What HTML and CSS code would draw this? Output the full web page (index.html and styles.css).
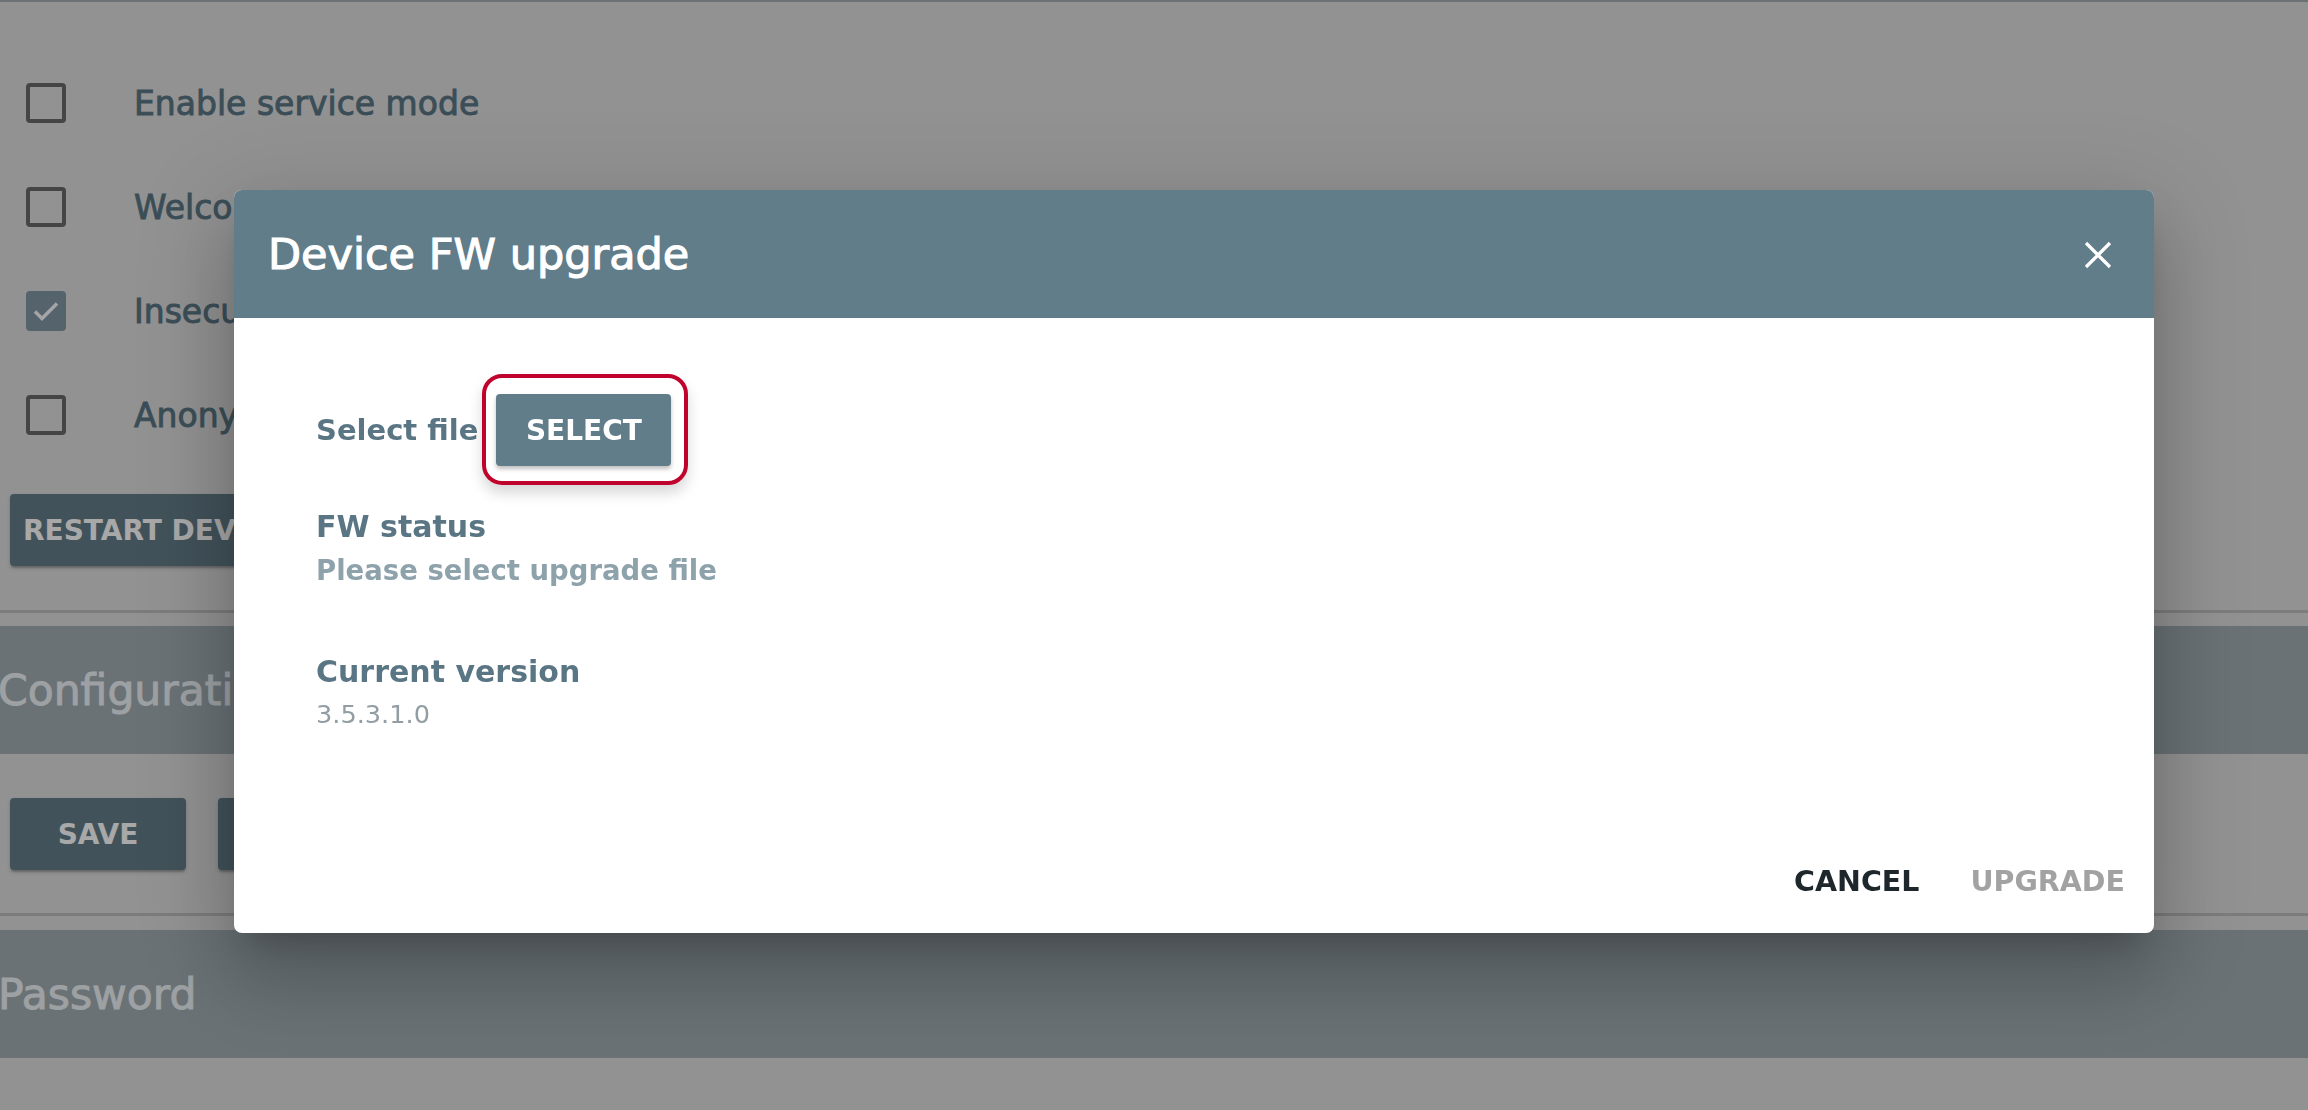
FILE: index.html
```html
<!DOCTYPE html>
<html lang="en">
<head>
<meta charset="utf-8">
<title>Device FW upgrade</title>
<link rel="stylesheet" href="styles.css">
</head>
<body>
<div class="page">
  <div class="top-strip"></div>
  <div class="options">
    <div class="option"><span class="box"></span><span class="opt-text">Enable service mode</span></div>
    <div class="option"><span class="box"></span><span class="opt-text">Welcome screen</span></div>
    <div class="option"><span class="box checked"><svg class="check" viewBox="0 0 40 40"><path d="M9 20.5 L16 27.5 L31 12.5" /></svg></span><span class="opt-text">Insecure</span></div>
    <div class="option"><span class="box"></span><span class="opt-text">Anonymous viewing</span></div>
  </div>
  <div class="actions actions-first"><button class="btn">RESTART DEVICE</button></div>
  <div class="divider"></div>
  <div class="band">Configuration</div>
  <div class="actions"><button class="btn">SAVE</button><button class="btn">RESTORE</button></div>
  <div class="divider divider-second"></div>
  <div class="band band-second">Password</div>
</div>

<div class="backdrop"></div>

<div class="dialog">
  <div class="dlg-head">
    <h2 class="dlg-title">Device FW upgrade</h2>
    <button class="close" aria-label="Close">
      <svg viewBox="0 0 28 28"><path d="M2 2 L26 26 M26 2 L2 26" /></svg>
    </button>
  </div>
  <div class="dlg-body">
    <div class="file-row">
      <span class="file-label">Select file</span>
      <span class="highlight"><button class="select-btn">SELECT</button></span>
    </div>
    <div class="field-label status-label">FW status</div>
    <div class="status-text">Please select upgrade file</div>
    <div class="field-label version-label">Current version</div>
    <div class="version-text">3.5.3.1.0</div>
  </div>
  <div class="dlg-foot">
    <button class="text-btn">CANCEL</button>
    <button class="text-btn disabled">UPGRADE</button>
  </div>
</div>
</body>
</html>
```

FILE: styles.css
```css
html, body {
  margin: 0;
  padding: 0;
}

body {
  width: 2308px;
  height: 1110px;
  overflow: hidden;
  background: #dedede;
  font-family: "DejaVu Sans", "Liberation Sans", sans-serif;
}

button {
  font-family: inherit;
  border: none;
  margin: 0;
  cursor: pointer;
}

.page {
  display: flex;
  flex-direction: column;
}

.top-strip {
  height: 2px;
  background: #a2adb3;
}

.options {
  display: flex;
  flex-direction: column;
  padding: 49px 0 0 26px;
}

.option {
  height: 104px;
  display: flex;
  align-items: center;
  gap: 68px;
}

.box {
  width: 40px;
  height: 40px;
  box-sizing: border-box;
  border: 4px solid #6a6a6a;
  border-radius: 4px;
  flex: none;
  display: flex;
  align-items: center;
  justify-content: center;
}

.box.checked {
  background: #8298a4;
  border-color: #8298a4;
}

.check {
  width: 40px;
  height: 40px;
  flex: none;
}

.check path {
  fill: none;
  stroke: #f7fbfd;
  stroke-width: 3.5;
}

.opt-text {
  font-size: 33px;
  color: #5a7785;
  -webkit-text-stroke: 0.9px #5a7785;
  white-space: nowrap;
}

.actions {
  display: flex;
  gap: 32px;
  padding-left: 10px;
  margin-top: 44px;
}

.actions-first {
  margin-top: 27px;
}

.btn {
  height: 72px;
  min-width: 176px;
  padding: 0 13px;
  background: #647d89;
  color: #ffffff;
  font-size: 28px;
  font-weight: bold;
  border-radius: 4px;
  box-shadow: 0 3px 2px -1px rgba(0,0,0,.2), 0 2px 4px rgba(0,0,0,.14);
}

.divider {
  height: 3px;
  background: #bcbcbc;
  margin-top: 44px;
}

.divider-second {
  margin-top: 43px;
}

.band {
  height: 128px;
  margin-top: 13px;
  background: #a2adb3;
  color: #f0f5f8;
  -webkit-text-stroke: 0.9px #f0f5f8;
  font-size: 42.5px;
  display: flex;
  align-items: center;
  padding-left: 0;
  text-indent: -2px;
}

.band-second {
  margin-top: 14px;
}

.backdrop {
  position: fixed;
  inset: 0;
  background: rgba(0,0,0,.34);
}

.dialog {
  position: absolute;
  left: 234px;
  top: 190px;
  width: 1920px;
  height: 743px;
  background: #ffffff;
  border-radius: 8px;
  overflow: hidden;
  display: flex;
  flex-direction: column;
  box-shadow: 0 22px 30px -14px rgba(0,0,0,.2), 0 48px 76px 6px rgba(0,0,0,.14), 0 18px 92px 16px rgba(0,0,0,.12);
}

.dlg-head {
  height: 128px;
  flex: none;
  background: #607d89;
  display: flex;
  align-items: center;
  justify-content: space-between;
  padding: 0 42px 0 34px;
}

.dlg-title {
  margin: 0;
  font-size: 43px;
  font-weight: normal;
  color: #ffffff;
  -webkit-text-stroke: 1.1px #ffffff;
  line-height: 1;
}

.close {
  width: 28px;
  height: 28px;
  padding: 0;
  background: transparent;
  display: flex;
  margin-top: 2px;
}

.close svg {
  width: 28px;
  height: 28px;
}

.close path {
  stroke: #ffffff;
  stroke-width: 3.2;
  fill: none;
}

.dlg-body {
  padding: 56px 0 0 82px;
  display: flex;
  flex-direction: column;
  align-items: flex-start;
}

.file-row {
  display: flex;
  align-items: center;
  height: 111px;
}

.file-label {
  font-size: 29px;
  font-weight: bold;
  color: #5a7684;
  margin-right: 4px;
}

.highlight {
  display: flex;
  padding: 16px 13px 15px 10px;
  border: 4px solid #c0032c;
  border-radius: 20px;
  box-shadow: 0 8px 14px rgba(0,0,0,.16);
}

.select-btn {
  width: 175px;
  height: 72px;
  background: #607d89;
  color: #ffffff;
  font-size: 28px;
  font-weight: bold;
  border-radius: 4px;
  box-shadow: 0 3px 4px rgba(0,0,0,.25);
}

.field-label {
  font-size: 30px;
  line-height: 36px;
  font-weight: bold;
  color: #5a7684;
}

.status-label {
  margin-top: 24px;
}

.status-text {
  margin-top: 9px;
  font-size: 27.5px;
  line-height: 33px;
  font-weight: bold;
  color: #8ea2ac;
}

.version-label {
  margin-top: 67px;
}

.version-text {
  margin-top: 9px;
  font-size: 25.6px;
  line-height: 31px;
  color: #929ea4;
}

.dlg-foot {
  margin-top: auto;
  display: flex;
  justify-content: flex-end;
  gap: 23px;
  padding: 0 15px 19px 0;
}

.text-btn {
  height: 64px;
  line-height: 64px;
  padding: 0 14px;
  background: transparent;
  font-size: 28.5px;
  font-weight: bold;
  color: #1e272c;
}

.text-btn.disabled {
  color: #a2a2a2;
}
```
